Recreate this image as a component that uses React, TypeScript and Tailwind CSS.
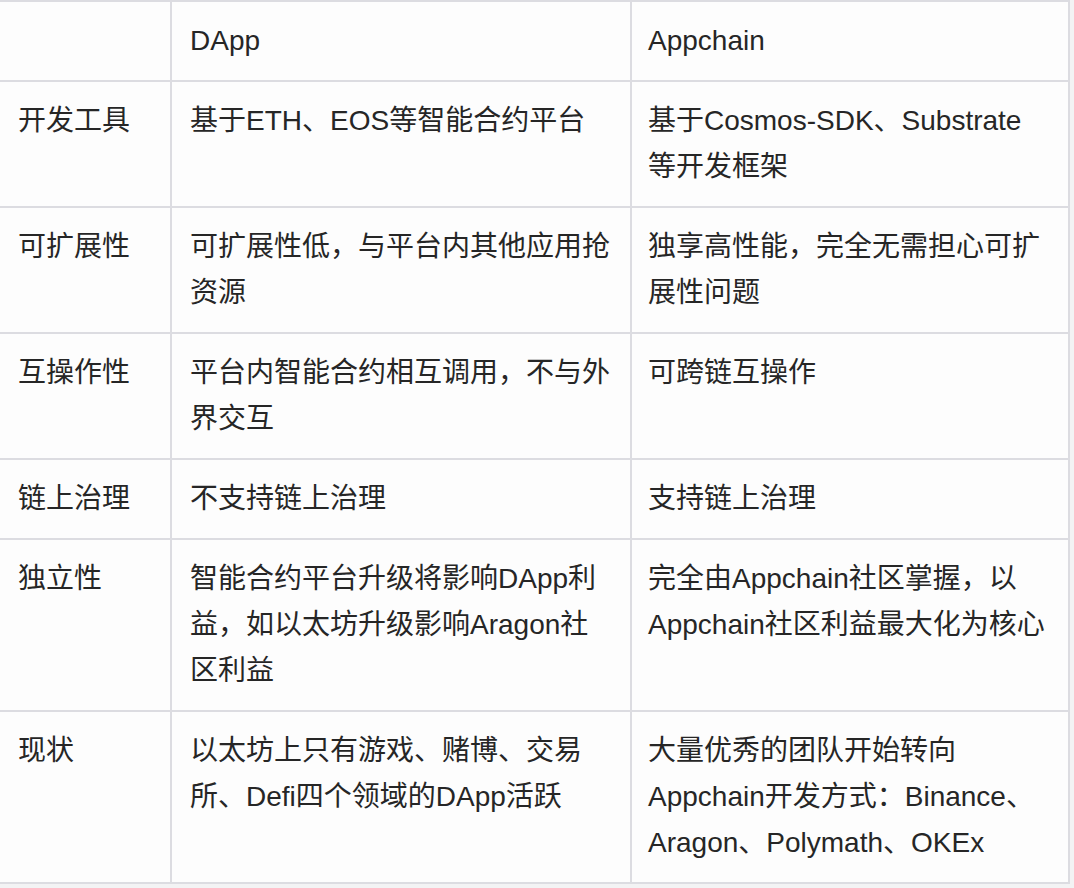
import React, { FC } from "react";

interface Row {
  head: string;
  dapp: string[];
  chain: string[];
}

const rows: Row[] = [
  {
    head: "开发工具",
    dapp: ["基于ETH、EOS等智能合约平台"],
    chain: ["基于Cosmos-SDK、Substrate", "等开发框架"],
  },
  {
    head: "可扩展性",
    dapp: ["可扩展性低，与平台内其他应用抢", "资源"],
    chain: ["独享高性能，完全无需担心可扩", "展性问题"],
  },
  {
    head: "互操作性",
    dapp: ["平台内智能合约相互调用，不与外", "界交互"],
    chain: ["可跨链互操作"],
  },
  {
    head: "链上治理",
    dapp: ["不支持链上治理"],
    chain: ["支持链上治理"],
  },
  {
    head: "独立性",
    dapp: ["智能合约平台升级将影响DApp利", "益，如以太坊升级影响Aragon社", "区利益"],
    chain: ["完全由Appchain社区掌握，以", "Appchain社区利益最大化为核心"],
  },
  {
    head: "现状",
    dapp: ["以太坊上只有游戏、赌博、交易", "所、Defi四个领域的DApp活跃"],
    chain: ["大量优秀的团队开始转向", "Appchain开发方式：Binance、", "Aragon、Polymath、OKEx"],
  },
];

const Lines: FC<{ lines: string[] }> = ({ lines }) => (
  <>
    {lines.map((l, i) => (
      <div key={i} className="whitespace-nowrap">
        {l}
      </div>
    ))}
  </>
);

const TableRow: FC<{ row: Row; last?: boolean }> = ({ row, last }) => (
  <div
    className={`grid grid-cols-[170px_460px_438px] ${
      last ? "" : "border-b-2 border-[#dcdce1]"
    }`}
  >
    <div className="py-4 pl-[18px]">{row.head}</div>
    <div className="py-4 pl-[18px] border-l-2 border-[#dcdce1]">
      <Lines lines={row.dapp} />
    </div>
    <div className="py-4 pl-[16px] border-l-2 border-[#dcdce1]">
      <Lines lines={row.chain} />
    </div>
  </div>
);

const App: FC = () => {
  return (
    <div
      className="w-[1074px] h-[888px] bg-[#f3f3f4] text-[#262626] text-[28px] leading-[46px]"
      style={{ fontFamily: '"Liberation Sans", "Noto Sans CJK SC", sans-serif' }}
    >
      <div className="w-[1070px] bg-[#fdfdfd] border-t-2 border-r-2 border-b-2 border-[#dcdce1]">
        <TableRow row={{ head: "", dapp: ["DApp"], chain: ["Appchain"] }} />
        {rows.map((r, i) => (
          <TableRow key={r.head} row={r} last={i === rows.length - 1} />
        ))}
      </div>
    </div>
  );
};

export default App;
